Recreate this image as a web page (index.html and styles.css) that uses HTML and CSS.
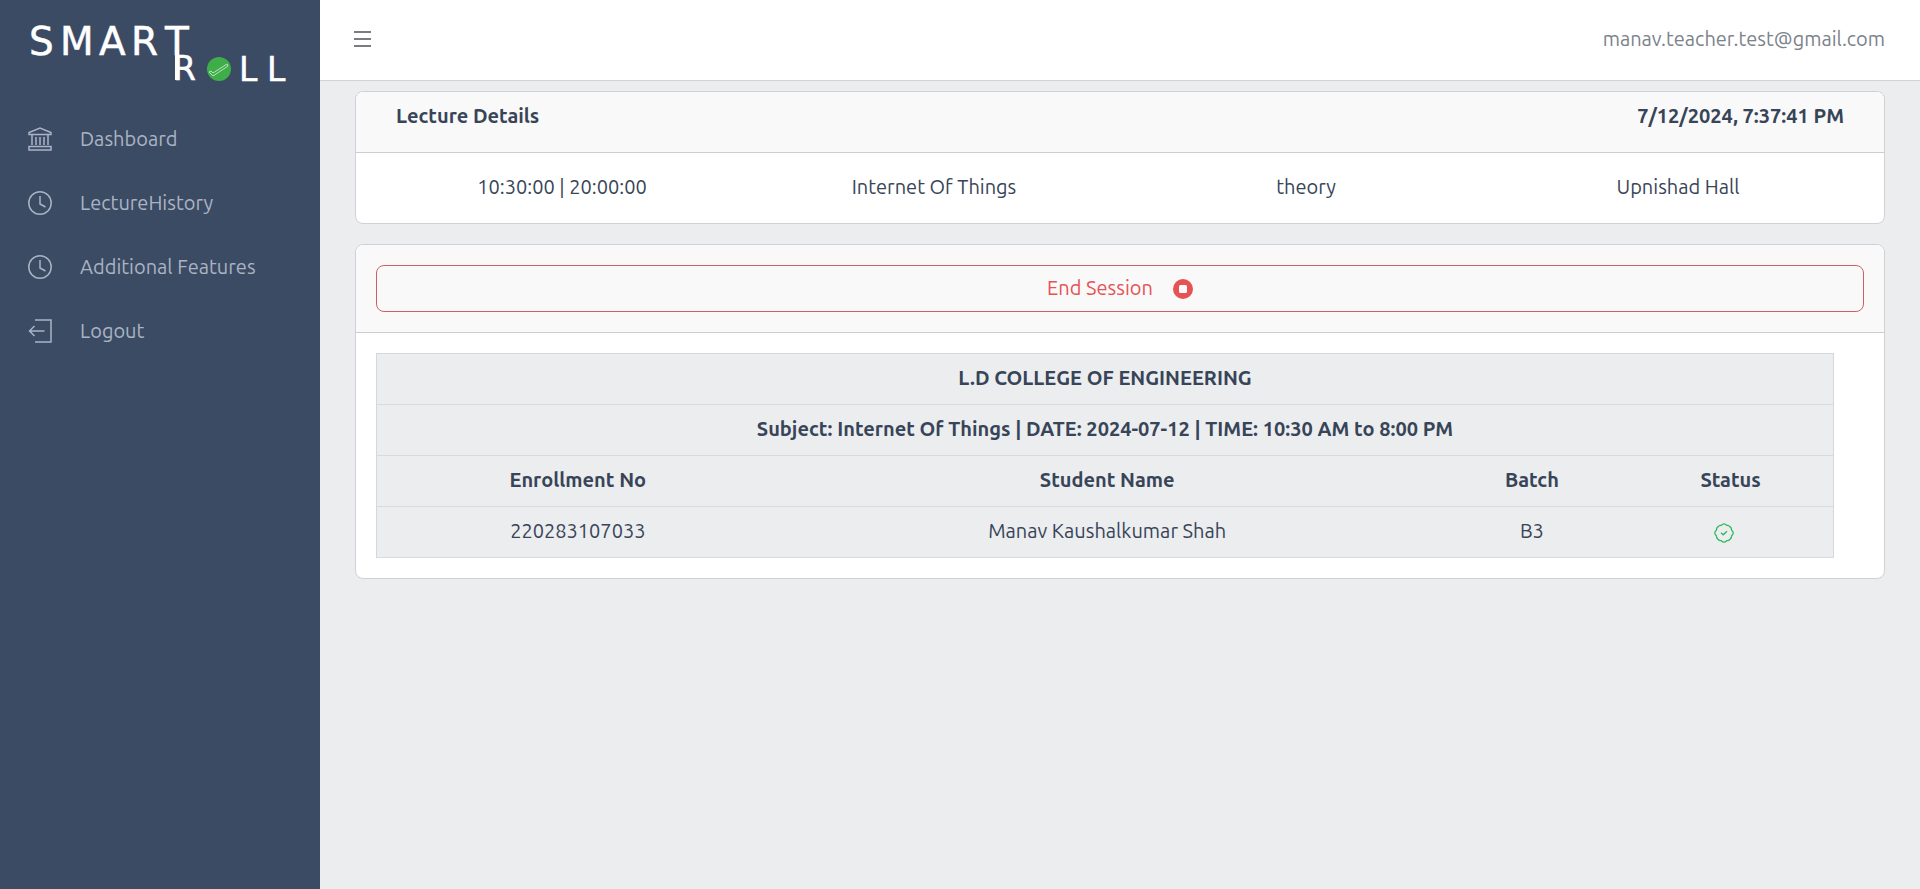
FILE: index.html
```html
<!DOCTYPE html>
<html lang="en">
<head>
<meta charset="utf-8">
<meta name="viewport" content="width=device-width, initial-scale=1">
<title>SmartRoll</title>
<link rel="stylesheet" href="styles.css">
</head>
<body>
<div class="app">
  <aside class="sidebar">
    <svg class="brand" viewBox="0 0 320 107" role="img" aria-label="SmartRoll">
      <text class="brand-top" x="29 60 99 131 165" y="55">SMART</text>
      <path class="brand-stem" d="M177 50V80"/>
      <text class="brand-bottom" x="173" y="80">R</text>
      <circle cx="219" cy="69" r="12" fill="#3fae49"/>
      <path d="M209 72l2-1 2 2 14-9 1 2-15 10z" fill="none" stroke="#b9e3bd" stroke-width="1"/>
      <text class="brand-bottom" x="239 267" y="81">LL</text>
    </svg>
    <nav class="nav">
      <a class="nav-link" href="#">
        <svg class="nav-icon" viewBox="0 0 24 24"><path d="M1 7.500V5.500L12 1l11 4.500v2zM1 19.500h22v3.500H1zM4 8v10M8 10v8M12 10v8M16 10v8M20 8v10"/></svg>
        <span>Dashboard</span>
      </a>
      <a class="nav-link" href="#">
        <svg class="nav-icon" viewBox="0 0 24 24"><circle cx="12" cy="12" r="11.200"/><path d="M12 5v8l5.500 3"/></svg>
        <span>LectureHistory</span>
      </a>
      <a class="nav-link" href="#">
        <svg class="nav-icon" viewBox="0 0 24 24"><circle cx="12" cy="12" r="11.200"/><path d="M12 5v8l5.500 3"/></svg>
        <span>Additional Features</span>
      </a>
      <a class="nav-link" href="#">
        <svg class="nav-icon" viewBox="0 0 24 24"><path d="M7 1h16v22H7M16.500 12H1.500M6.500 7l-5 5 5 5"/></svg>
        <span>Logout</span>
      </a>
    </nav>
  </aside>

  <div class="page">
    <header class="topbar">
      <button class="menu-button" type="button" aria-label="Toggle menu">
        <svg viewBox="0 0 18 18" class="menu-icon"><path d="M0 2h17M0 9h17M0 16h17"/></svg>
      </button>
      <span class="user">manav.teacher.test@gmail.com</span>
    </header>

    <main class="content">
      <section class="card">
        <div class="card-header lecture-header">
          <strong>Lecture Details</strong>
          <strong>7/12/2024, 7:37:41 PM</strong>
        </div>
        <div class="lecture-body">
          <span>10:30:00 | 20:00:00</span>
          <span>Internet Of Things</span>
          <span>theory</span>
          <span>Upnishad Hall</span>
        </div>
      </section>

      <section class="card">
        <div class="card-header session-header">
          <button class="end-button" type="button">
            <span>End Session</span>
            <svg class="stop-icon" viewBox="0 0 20 20"><path fill-rule="evenodd" d="M10 0a10 10 0 1 0 0 20 10 10 0 0 0 0-20zM7.500 6h5A1.500 1.500 0 0 1 14 7.500v5a1.500 1.500 0 0 1-1.500 1.500h-5A1.500 1.500 0 0 1 6 12.500v-5A1.500 1.500 0 0 1 7.500 6z"/></svg>
          </button>
        </div>
        <div class="session-body">
          <table class="attendance">
            <colgroup><col class="col-enrollment"><col class="col-name"><col class="col-batch"><col class="col-status"></colgroup>
            <thead>
              <tr><th colspan="4">L.D COLLEGE OF ENGINEERING</th></tr>
              <tr><th colspan="4">Subject: Internet Of Things | DATE: 2024-07-12 | TIME: 10:30 AM to 8:00 PM</th></tr>
              <tr><th>Enrollment No</th><th>Student Name</th><th>Batch</th><th>Status</th></tr>
            </thead>
            <tbody>
              <tr>
                <td>220283107033</td><td>Manav Kaushalkumar Shah</td><td>B3</td>
                <td><svg class="status-icon" viewBox="0 0 20 20" role="img" aria-label="Present"><path d="M10 .8Q11.500 .8 12.700 2.400Q14.800 2 16.100 3.900Q17.900 5.200 17.600 7.300Q19.200 8.500 19.200 10Q19.200 11.500 17.600 12.700Q17.900 14.800 16.100 16.100Q14.800 18 12.700 17.600Q11.500 19.200 10 19.200Q8.500 19.200 7.300 17.600Q5.200 18 3.900 16.100Q2.100 14.800 2.400 12.700Q.8 11.500 .8 10Q.8 8.500 2.400 7.300Q2.100 5.200 3.900 3.900Q5.200 2 7.300 2.400Q8.500 .8 10 .8ZM7 9.800l2.200 2L13 8.200"/></svg></td>
              </tr>
            </tbody>
          </table>
        </div>
      </section>
    </main>
  </div>
</div>
</body>
</html>
```
FILE: styles.css
```css
* { box-sizing: border-box; }

body {
  margin: 0;
  background: #ebedef;
  color: #384457;
  font-family: Ubuntu, "Noto Sans", sans-serif;
  font-size: 20px;
  font-weight: 400;
  line-height: 28px;
}

strong, th { font-weight: 600; }

.app { display: flex; min-height: 100vh; }

.sidebar {
  flex: 0 0 320px;
  background: #3c4b64;
}

.brand { display: block; width: 100%; }
.brand text {
  fill: #fff;
  stroke: #fff;
  stroke-width: 0.500;
  font-family: "DejaVu Sans", sans-serif;
  font-weight: 400;
}
.brand .brand-top { font-size: 39px; }
.brand .brand-bottom { font-size: 33px; }
.brand-stem { stroke: #fff; stroke-width: 4; }

.nav { display: flex; flex-direction: column; }

.nav-link {
  display: flex;
  align-items: center;
  gap: 28px;
  height: 64px;
  padding: 0 28px;
  color: #aab3c3;
  text-decoration: none;
}

.end-button span { padding-bottom: 2px; }

.nav-icon {
  width: 24px;
  height: 24px;
  fill: none;
  stroke: currentColor;
  stroke-width: 1.500;
}

.page { flex: 1; min-width: 0; }

.topbar {
  display: flex;
  align-items: center;
  justify-content: space-between;
  height: 81px;
  padding: 0 35px 3px 34px;
  background: #fff;
  border-bottom: 1px solid #d2d4d7;
}

.menu-button {
  display: flex;
  padding: 0;
  border: 0;
  background: none;
  color: #4f5257;
  cursor: pointer;
}

.menu-icon { width: 18px; height: 18px; stroke: currentColor; stroke-width: 1.300; }

.user { color: #7c828b; }

.content {
  display: flex;
  flex-direction: column;
  gap: 20px;
  padding: 10px 35px;
}

.card {
  background: #fff;
  border: 1px solid #cfd1d4;
  border-radius: 8px;
  overflow: hidden;
}

.card-header {
  background: #f9f9fa;
  border-bottom: 1px solid #cbcdd0;
}

.lecture-header {
  display: flex;
  justify-content: space-between;
  padding: 10px 40px 22px;
}

.lecture-body {
  display: grid;
  grid-template-columns: repeat(4, 1fr);
  padding: 20px 20px 22px;
  text-align: center;
}

.session-header { padding: 20px; }

.end-button {
  display: flex;
  align-items: center;
  justify-content: center;
  gap: 20px;
  width: 100%;
  height: 47px;
  border: 1px solid #d06060;
  border-radius: 8px;
  background: transparent;
  color: #e55353;
  font: inherit;
  cursor: pointer;
}

.stop-icon { width: 20px; height: 20px; fill: currentColor; }

.session-body { padding: 20px 50px 20px 20px; }

.attendance {
  width: 100%;
  table-layout: fixed;
  border-collapse: collapse;
  border: 1px solid #d5d7da;
  background: #ebedef;
  text-align: center;
}

.attendance th,
.attendance td {
  height: 51px;
  padding: 0 10px 2px;
  border-bottom: 1px solid #d8dadd;
}

.col-enrollment { width: 27.600%; }
.col-name { width: 45.100%; }
.col-batch { width: 13.200%; }
.col-status { width: 14.100%; }

.status-icon {
  width: 20px;
  height: 20px;
  margin-right: 14px;
  vertical-align: middle;
  fill: none;
  stroke: #2eb85c;
  stroke-width: 1.300;
}
```
